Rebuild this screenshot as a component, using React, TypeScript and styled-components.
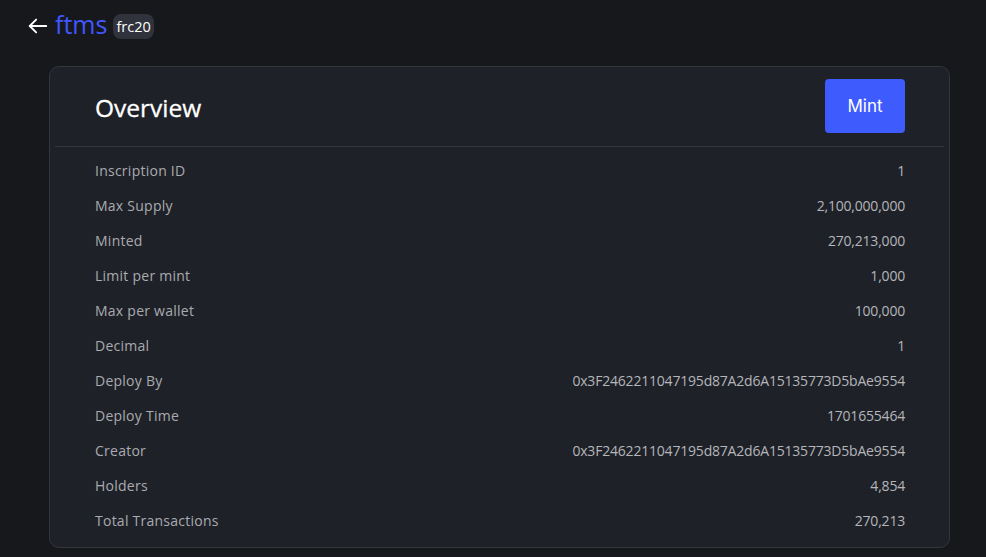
import styled, { createGlobalStyle } from 'styled-components'

const GlobalStyle = createGlobalStyle`
  html, body {
    margin: 0;
    padding: 0;
    background: #17181c;
  }
  body {
    font-family: "Open Sans", "Liberation Sans", sans-serif;
    color: #fff;
  }
`

const Page = styled.div`
  min-height: 557px;
  padding: 10px 36px 10px 49px;
  box-sizing: border-box;
`

const TopBar = styled.div`
  display: flex;
  align-items: center;
  height: 32px;
  margin-left: -22px;
  margin-bottom: 24px;
`

const BackButton = styled.button`
  background: none;
  border: none;
  padding: 0;
  margin-right: 6px;
  display: flex;
  align-items: center;
  cursor: pointer;
`

const Ticker = styled.span`
  font-family: "Open Sans", sans-serif;
  font-size: 25px;
  color: #4057ff;
  line-height: 1;
  margin-top: -3px;
`

const Badge = styled.span`
  margin-left: 6px;
  background: #30333b;
  color: #fff;
  border-radius: 8px;
  padding: 3px 3px;
  font-family: "Open Sans", sans-serif;
  font-size: 14.5px;
  line-height: 19px;
`

const Card = styled.section`
  background: #1f2128;
  border: 1px solid #34363d;
  border-radius: 10px;
  padding-bottom: 9px;
`

const CardHeader = styled.div`
  height: 78px;
  display: flex;
  align-items: center;
  justify-content: space-between;
  padding: 0 44px 0 45px;
`

const Title = styled.h2`
  margin: 0;
  font-size: 24.5px;
  font-weight: 500;
  color: #fff;
  margin-top: 2px;
  -webkit-text-stroke: 0.3px #fff;
`

const MintButton = styled.button`
  width: 80px;
  height: 54px;
  border: none;
  border-radius: 4px;
  background: #3e5bfe;
  color: #fff;
  font-family: Inter, sans-serif;
  font-size: 17px;
  cursor: pointer;
`

const Divider = styled.hr`
  margin: 1px 5px 0;
  border: none;
  border-top: 1px solid #33353c;
`

const List = styled.div`
  padding: 6px 44px 0 45px;
`

const Row = styled.div`
  height: 35px;
  display: flex;
  align-items: center;
  justify-content: space-between;
  font-size: 14px;
`

const Label = styled.span`
  color: #a9abb0;
  letter-spacing: 0.25px;
`

const Value = styled.span`
  color: #b4b6ba;
  letter-spacing: -0.2px;
`

const rows: [string, string][] = [
  ['Inscription ID', '1'],
  ['Max Supply', '2,100,000,000'],
  ['Minted', '270,213,000'],
  ['Limit per mint', '1,000'],
  ['Max per wallet', '100,000'],
  ['Decimal', '1'],
  ['Deploy By', '0x3F2462211047195d87A2d6A15135773D5bAe9554'],
  ['Deploy Time', '1701655464'],
  ['Creator', '0x3F2462211047195d87A2d6A15135773D5bAe9554'],
  ['Holders', '4,854'],
  ['Total Transactions', '270,213'],
]

export default function App() {
  return (
    <>
      <GlobalStyle />
      <Page>
        <TopBar>
          <BackButton aria-label="back">
            <svg width="22" height="22" viewBox="0 0 24 24" fill="none" stroke="#fff" strokeWidth="2" strokeLinecap="round" strokeLinejoin="round">
              <path d="M21 12H3" />
              <path d="M10 5l-7 7 7 7" />
            </svg>
          </BackButton>
          <Ticker>ftms</Ticker>
          <Badge>frc20</Badge>
        </TopBar>
        <Card>
          <CardHeader>
            <Title>Overview</Title>
            <MintButton>Mint</MintButton>
          </CardHeader>
          <Divider />
          <List>
            {rows.map(([label, value]) => (
              <Row key={label}>
                <Label>{label}</Label>
                <Value>{value}</Value>
              </Row>
            ))}
          </List>
        </Card>
      </Page>
    </>
  )
}
